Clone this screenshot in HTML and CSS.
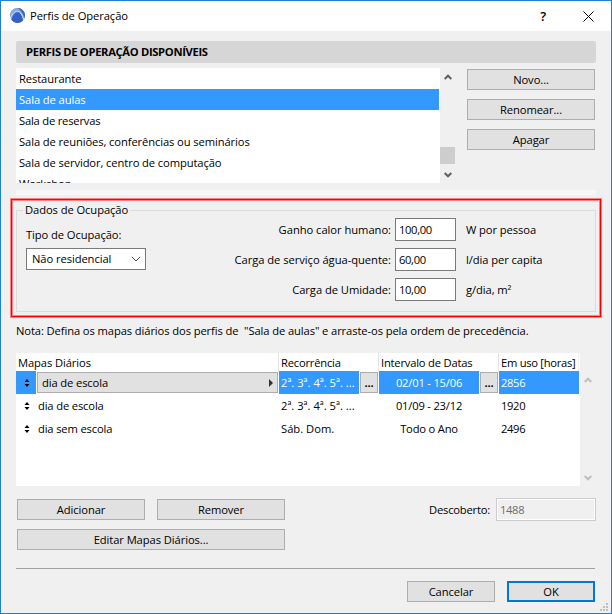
FILE: index.html
```html
<!DOCTYPE html>
<html lang="pt">
<head>
<meta charset="utf-8">
<title>Perfis de Operação</title>
<link rel="stylesheet" href="styles.css">
</head>
<body>
<div class="window">
  <header class="titlebar">
    <svg class="logo" width="17" height="17" viewBox="0 0 17 17"><circle cx="8.500" cy="8.500" r="7.500" fill="#6f97dc"/><path d="M2 4.800A7.500 7.500 0 0 1 15.800 8L15 12C13.800 6 11 3 8 3.200C5 3.500 3 6 1.200 10.500Z" fill="#86a9e2"/><path d="M8.500 1A7.500 7.500 0 0 1 16 8.500L15.300 11.500C14.500 7 12.500 3.300 8.500 1Z" fill="#3a64ba"/><path d="M2.600 13C3.500 8.500 6 5.300 8.500 5.300C12 5.500 13 9.500 14 13.500A7.500 7.500 0 0 1 2.600 13Z" fill="#3560c4"/><path d="M1.300 11.500C3.500 6 6 4 8.500 4.200C12 4.600 13.300 8.500 14.700 12.500" fill="none" stroke="#dfe9fa"/></svg>
    <h1 class="title">Perfis de Operação</h1>
    <span class="help">?</span>
    <svg class="close" width="11" height="11" viewBox="0 0 11 11"><path d="M.5.5l10 10M10.500.5l-10 10" stroke="#000" stroke-width="1"/></svg>
  </header>
  <main class="content">
    <h2 class="section">PERFIS DE OPERAÇÃO DISPONÍVEIS</h2>
    <section class="profiles">
      <ul class="list">
        <li>Restaurante</li>
        <li class="selected">Sala de aulas</li>
        <li class="tight">Sala de reservas</li>
        <li>Sala de reuniões, conferências ou seminários</li>
        <li>Sala de servidor, centro de computação</li>
        <li>Workshop</li>
      </ul>
      <div class="scroll">
        <svg width="8" height="6" viewBox="0 0 8 6"><path d="M.7 5L4 1.700L7.300 5" /></svg>
        <div class="thumb"></div>
        <svg width="8" height="6" viewBox="0 0 8 6"><path d="M.7 1L4 4.300L7.300 1" /></svg>
      </div>
      <div class="actions">
        <button>Novo...</button>
        <button>Renomear...</button>
        <button>Apagar</button>
      </div>
    </section>
    <div class="strip"></div>
    <section class="highlight"><div class="highlight-line">
      <fieldset class="group">
        <legend>Dados de Ocupação</legend>
        <div class="occupation">
          <div class="type">
            <label>Tipo de Ocupação:</label>
            <div class="select">Não residencial<svg width="10" height="6" viewBox="0 0 10 6"><path d="M.8.8L5 5L9.200.8" fill="none" stroke="#444"/></svg></div>
          </div>
          <div class="values">
            <label>Ganho calor humano:</label><div class="field">100,00</div><span>W por pessoa</span>
            <label>Carga de serviço água-quente:</label><div class="field">60,00</div><span>l/dia per capita</span>
            <label>Carga de Umidade:</label><div class="field">10,00</div><span>g/dia, m²</span>
          </div>
        </div>
      </fieldset>
    </div></section>
    <p class="note">Nota: Defina os mapas diários dos perfis de&nbsp; "Sala de aulas" e arraste-os pela ordem de precedência.</p>
    <section class="maps">
      <div class="table">
        <div class="row head"><span class="first">Mapas Diários</span><span>Recorrência</span><span>Intervalo de Datas</span><span class="last">Em uso [horas]</span></div>
        <div class="row active">
          <div class="name"><span class="grip"><svg width="6" height="8" viewBox="0 0 6 8"><path d="M.5 3L3 0L5.500 3ZM.5 5L3 8L5.500 5Z"/></svg></span><button class="popup">dia de escola<svg width="4" height="8" viewBox="0 0 4 8"><path d="M0 0L4 4L0 8Z" fill="#333"/></svg></button></div>
          <div class="cell"><span class="days">2ª. 3ª. 4ª. 5ª. ...</span><button class="more">...</button></div>
          <div class="cell"><span class="dates">02/01 - 15/06</span><button class="more">...</button></div>
          <span class="hours">2856</span>
        </div>
        <div class="row">
          <div class="name"><span class="grip"><svg width="6" height="8" viewBox="0 0 6 8"><path d="M.5 3L3 0L5.500 3ZM.5 5L3 8L5.500 5Z"/></svg></span><span class="plain">dia de escola</span></div>
          <div class="cell"><span class="days">2ª. 3ª. 4ª. 5ª. ...</span></div>
          <div class="cell"><span class="dates">01/09 - 23/12</span></div>
          <span class="hours">1920</span>
        </div>
        <div class="row">
          <div class="name"><span class="grip"><svg width="6" height="8" viewBox="0 0 6 8"><path d="M.5 3L3 0L5.500 3ZM.5 5L3 8L5.500 5Z"/></svg></span><span class="plain">dia sem escola</span></div>
          <div class="cell"><span class="days">Sáb. Dom.</span></div>
          <div class="cell"><span class="dates">Todo o Ano</span></div>
          <span class="hours">2496</span>
        </div>
      </div>
      <div class="scroll idle">
        <svg width="8" height="6" viewBox="0 0 8 6"><path d="M.7 5L4 1.700L7.300 5" /></svg>
        <svg width="8" height="6" viewBox="0 0 8 6"><path d="M.7 1L4 4.300L7.300 1" /></svg>
      </div>
    </section>
    <section class="edit">
      <div class="edit-buttons">
        <button>Adicionar</button><button>Remover</button>
        <button class="wide">Editar Mapas Diários...</button>
      </div>
      <label>Descoberto:</label><div class="readonly">1488</div>
    </section>
    <footer class="footer"><button>Cancelar</button><button class="ok">OK</button></footer>
  </main>
  <svg class="resize" width="8" height="8" viewBox="0 0 8 8" fill="#bfbfbf"><path d="M6 0h2v2H6zM3 3h2v2H3zM6 3h2v2H6zM0 6h2v2H0zM3 6h2v2H3zM6 6h2v2H6z"/></svg>
</div>
</body>
</html>
```
FILE: styles.css
```css
* { box-sizing: border-box; }
body { margin: 0; font: 11.2px/16px "Open Sans", "Noto Sans", sans-serif; letter-spacing: -.08px; color: #000; }
h1, h2, p, ul { margin: 0; padding: 0; }
svg { display: block; flex: none; }
.window { position: relative; width: 612px; height: 614px; border: 1px solid #1c80d3; background: #f0f0f0; overflow: hidden; white-space: nowrap; }
.titlebar { height: 30px; display: flex; align-items: center; background: #fff; padding: 0 17px 0 8px; }
.logo { margin-top: -2px; }
.title { font-size: 11.2px; font-weight: 400; margin-left: 4px; flex: 1; }
.help { font-size: 13px; font-weight: 600; margin-right: 37px; margin-top: -1px; }
.content { padding: 10px 15px 0; }
.section { height: 22px; padding-left: 10px; background: #d6d6d6; border-radius: 2px; font-size: 11.2px; line-height: 22px; letter-spacing: -.32px; }
button { display: flex; align-items: center; justify-content: center; height: 21px; padding: 0; border: 1px solid #adadad; background: #e1e1e1; font: inherit; color: inherit; letter-spacing: inherit; }
.profiles { display: flex; height: 115px; margin-top: 5px; }
.list { width: 424px; height: 115px; overflow: hidden; list-style: none; background: #fff; padding-right: 1px; }
.list li { height: 21px; line-height: 21px; padding-left: 3px; letter-spacing: -.1px; }
.list .tight { letter-spacing: -.2px; }
.list .selected { background: #3399ff; color: #fff; }
.scroll { width: 15px; display: flex; flex-direction: column; align-items: center; padding: 6px 0 5px; }
.scroll path { fill: none; stroke: #606060; stroke-width: 2; }
.thumb { width: 15px; height: 17px; background: #cdcdcd; margin: auto 0 8px; }
.actions { width: 128px; margin: 1px 0 0 12px; display: grid; gap: 9px; align-content: start; }
.strip { height: 5px; margin-top: 7px; background: #f7f7f7; }
.highlight { margin: 3px -6px 0; height: 120px; border: 1px solid #ff8080; }
.highlight-line { height: 118px; border: 1px solid #f00; box-shadow: inset 0 0 0 1px #ff8080; padding: 2px 4px 0; }
.group { height: 110px; margin: 0; padding: 0; border: 1px solid #dcdcdc; }
.group legend { margin-left: 6px; padding: 0 2px; height: 16px; }
.occupation { display: flex; }
.type { width: 129px; padding: 9px 0 0 9px; }
.type label { display: block; }
.select { width: 120px; height: 22px; margin-top: 5px; padding: 0 4px 0 5px; display: flex; align-items: center; justify-content: space-between; border: 1px solid #7a7a7a; background: #fff; }
.values { display: grid; grid-template-columns: 249px 61px auto; grid-auto-rows: 23px; row-gap: 7px; align-items: center; }
.values label { text-align: right; padding-right: 4px; letter-spacing: -.04px; }
.values span { padding-left: 10px; }
.field { height: 23px; line-height: 22px; padding-left: 3px; border: 1px solid #7a7a7a; background: #fff; letter-spacing: -.35px; }
.note { height: 16px; margin-top: 5px; letter-spacing: -.1px; }
.maps { height: 133px; margin-top: 14px; display: flex; }
.table { width: 564px; background: #fff; letter-spacing: -.12px; }
.row { display: grid; grid-template-columns: 263px 100px 120px 80px; height: 23px; line-height: 23px; }
.head { height: 18px; line-height: 19px; }
.head span { padding-left: 2px; border-right: 1px solid #e3e3e3; letter-spacing: -.2px; }
.head .first { letter-spacing: -.1px; }
.head .last { border-right-color: #f0f0f0; letter-spacing: -.28px; }
.name, .cell { display: flex; align-items: center; }
.grip { width: 20px; height: 23px; padding-left: 1px; display: flex; align-items: center; justify-content: center; }
.plain { padding-left: 2px; letter-spacing: -.15px; }
.popup { width: 241px; margin-left: 1px; padding: 0 4px 0 4px; justify-content: space-between; }
.days { width: 80px; padding-left: 2px; letter-spacing: 0; }
.dates { width: 100px; text-align: center; letter-spacing: -.2px; }
.more { width: 18px; margin-left: 1px; font-weight: 700; }
.hours { padding-left: 2px; letter-spacing: -.35px; }
.active .grip, .active .days, .active .dates, .active .hours { background: #3399ff; }
.active .days, .active .dates, .active .hours { color: #fff; }
.idle { justify-content: space-between; padding-top: 24px; }
.idle path { stroke: #bfbfbf; }
.edit { height: 82px; display: flex; padding-top: 12px; }
.edit-buttons { width: 268px; margin: 1px 0 0 1px; display: grid; grid-template-columns: 128px 128px; gap: 9px 12px; align-content: start; }
.wide { grid-column: span 2; }
.edit label { margin-left: auto; padding: 4px 6px 0 0; letter-spacing: -.2px; }
.readonly { width: 100px; height: 23px; line-height: 22px; padding-left: 3px; border: 1px solid #ccc; box-shadow: inset 0 0 0 1px #fff; color: #6d6d6d; letter-spacing: -.35px; }
.footer { display: flex; justify-content: flex-end; gap: 12px; margin-right: 1px; border-top: 1px solid #a0a0a0; padding-top: 12px; }
.footer button { width: 88px; }
.footer .ok { border: 2px solid #0078d7; }
.resize { position: absolute; right: 3px; bottom: 2px; }
```
